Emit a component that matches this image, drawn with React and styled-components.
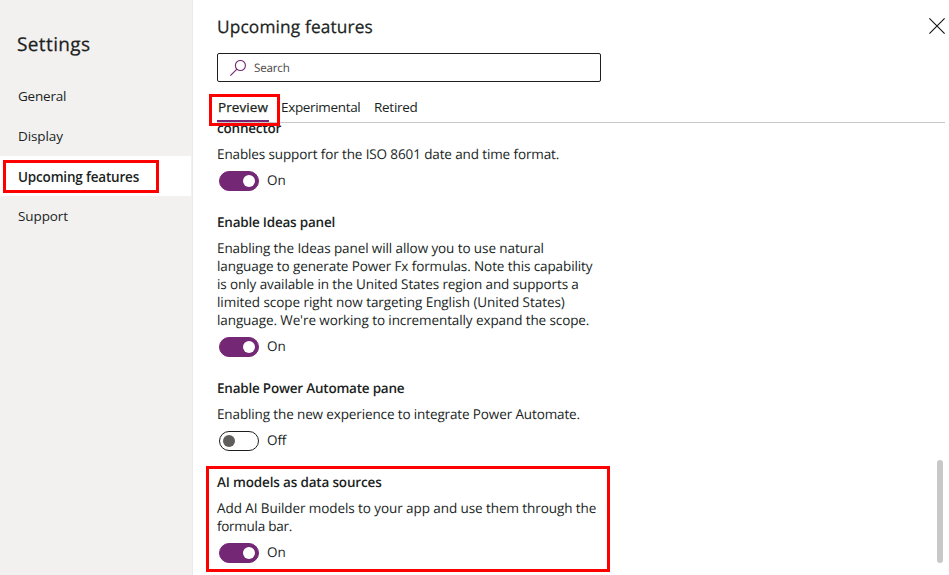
import React from "react";
import styled, { createGlobalStyle } from "styled-components";

const GlobalStyle = createGlobalStyle`
  *, *::before, *::after { box-sizing: border-box; }
  body {
    margin: 0;
    overflow: hidden;
    background: #fff;
    color: #201f1e;
    font: 400 13.5px/18px "Open Sans", "Noto Sans", sans-serif;
    text-rendering: geometricPrecision;
  }
  h1, h2, h3, p { margin: 0; }
  button { border: 0; padding: 0; background: none; color: inherit; font: inherit; }
`;

const Text = styled.span`
  letter-spacing: ${(p) => p.$track || 0}px;
  white-space: pre;
`;

const Dialog = styled.div`
  display: flex;
  width: 949px;
  height: 575px;
  overflow: hidden;
`;

const Sidebar = styled.aside`
  flex: 0 0 193px;
  display: flex;
  flex-direction: column;
  background: #f2f1ef;
  border-right: 1px solid #eae9e7;
`;

const SidebarTitle = styled.h1`
  padding: 31px 0 0 17px;
  height: 76px;
  font-size: 19px;
  line-height: 26px;
  font-weight: 500;
  -webkit-text-stroke: 0.25px currentColor;
`;

const NavItem = styled.button`
  position: relative;
  display: flex;
  align-items: center;
  width: 191px;
  height: 40px;
  padding: ${(p) => (p.$active ? 1 : 0)}px 0 0 18px;
  text-align: left;
  font-weight: ${(p) => (p.$active ? 600 : 400)};
  background: ${(p) => (p.$active ? "#fff" : "transparent")};
`;

const Highlight = styled.span`
  position: absolute;
  z-index: 2;
  top: ${(p) => p.$top}px;
  left: ${(p) => p.$left}px;
  width: ${(p) => p.$width}px;
  height: ${(p) => p.$height}px;
  border: 3px solid #fe0000;
  pointer-events: none;
`;

const Main = styled.main`
  flex: 1;
  min-width: 0;
  display: flex;
  flex-direction: column;
`;

const Header = styled.header`
  display: flex;
  justify-content: space-between;
  height: 53px;
  padding: 15px 4px 0 24px;
`;

const Heading = styled.h2`
  padding-top: 1px;
  font-size: 17.3px;
  line-height: 24px;
  font-weight: 500;
  -webkit-text-stroke: 0.25px currentColor;
`;

const CloseButton = styled.button`
  width: 16px;
  height: 16px;
  margin-top: 3px;
  svg { display: block; }
`;

const SearchBox = styled.div`
  display: flex;
  align-items: center;
  width: 384px;
  height: 29px;
  margin-left: 24px;
  padding-left: 12px;
  gap: 8px;
  border: 1px solid #201f1e;
  border-radius: 2px;
  color: #484644;
  font-size: 11.6px;
`;

const SearchText = styled(Text)`
  padding-top: 2px;
`;

const TabList = styled.div`
  position: relative;
  z-index: 1;
  display: flex;
  align-items: flex-start;
  height: 41px;
  margin: 0 4px 0 24px;
  padding-top: 16px;
  border-bottom: 1px solid #c8c8c8;
`;

const Tab = styled.button`
  position: relative;
  width: ${(p) => p.$width}px;
  height: 24px;
  margin-right: ${(p) => p.$gap || 0}px;
  padding: 0 0 5px 1px;
  text-align: left;
  font-weight: ${(p) => (p.$active ? 500 : 400)};
  -webkit-text-stroke: ${(p) => (p.$active ? 0.25 : 0)}px currentColor;
  border-bottom: 2px solid ${(p) => (p.$active ? "#742774" : "transparent")};
`;

const ScrollArea = styled.div`
  position: relative;
  flex: 1;
  min-height: 0;
  overflow: hidden;
`;

const FeatureList = styled.div`
  display: flex;
  flex-direction: column;
  gap: 22px;
  margin-top: -4px;
  padding-left: 24px;
`;

const Feature = styled.section`
  position: relative;
  display: flex;
  flex-direction: column;
  gap: 8px;
`;

const FeatureTitle = styled.h3`
  font-size: 13.5px;
  line-height: 18px;
  font-weight: 600;
`;

const Description = styled.p`
  display: flex;
  flex-direction: column;
`;

const ToggleRow = styled.div`
  display: flex;
  align-items: center;
  gap: 8px;
  height: 20px;
  padding-left: 2px;
  line-height: 20px;
`;

const ToggleLabel = styled(Text)`
  margin-top: -2px;
`;

const Track = styled.button`
  display: flex;
  align-items: center;
  justify-content: ${(p) => (p.$on ? "flex-end" : "flex-start")};
  width: 40px;
  height: 20px;
  padding: 0 ${(p) => (p.$on ? 3 : 4)}px 0 3px;
  border-radius: 10px;
  border: 1px solid ${(p) => (p.$on ? "#742774" : "#201f1e")};
  background: ${(p) => (p.$on ? "#742774" : "#fff")};
`;

const Thumb = styled.span`
  width: 12px;
  height: 12px;
  border-radius: 50%;
  background: ${(p) => (p.$on ? "#fff" : "#605e5c")};
`;

const Scrollbar = styled.div`
  position: absolute;
  top: 337px;
  right: 6px;
  width: 6px;
  height: 103px;
  border-radius: 3px;
  background: #c8c8c8;
`;

const NAV = [
  { label: "General", track: -0.2 },
  { label: "Display", track: -0.1 },
  { label: "Upcoming features", track: -0.18, active: true },
  { label: "Support", track: -0.1 },
];

const FEATURES = [
  {
    title: "connector",
    track: -0.2,
    lines: [["Enables support for the ISO 8601 date and time format.", -0.12]],
    on: true,
  },
  {
    title: "Enable Ideas panel",
    track: -0.22,
    lines: [
      ["Enabling the Ideas panel will allow you to use natural", -0.095],
      ["language to generate Power Fx formulas. Note this capability", -0.1],
      ["is only available in the United States region and supports a", -0.1],
      ["limited scope right now targeting English (United States)", -0.055],
      ["language. We're working to incrementally expand the scope.", -0.1],
    ],
    on: true,
  },
  {
    title: "Enable Power Automate pane",
    track: -0.22,
    lines: [["Enabling the new experience to integrate Power Automate.", -0.127]],
    on: false,
  },
  {
    title: "AI models as data sources",
    track: -0.17,
    lines: [
      ["Add AI Builder models to your app and use them through the", -0.08],
      ["formula bar.", -0.27],
    ],
    on: true,
    highlighted: true,
  },
];

function CloseIcon() {
  return (
    <svg width="16" height="16" viewBox="0 0 16 16" fill="none" stroke="#111" strokeWidth="1.1">
      <path d="M0.4 0.4 15.6 15.6M15.6 0.4 0.4 15.6" />
    </svg>
  );
}

function SearchIcon() {
  return (
    <svg width="16" height="16" viewBox="0 0 16 16" fill="none" stroke="#742774" strokeWidth="1.1">
      <circle cx="10.4" cy="5.5" r="5" />
      <path d="M6.9 9.1 0.4 15.6" />
    </svg>
  );
}

function Toggle({ on }) {
  return (
    <ToggleRow>
      <Track type="button" role="switch" aria-checked={on} $on={on}>
        <Thumb $on={on} />
      </Track>
      <ToggleLabel $track={-0.1}>{on ? "On" : "Off"}</ToggleLabel>
    </ToggleRow>
  );
}

export default function App() {
  return (
    <>
      <GlobalStyle />
      <Dialog>
        <Sidebar>
          <SidebarTitle>
            <Text $track={0.38}>Settings</Text>
          </SidebarTitle>
          {NAV.map((item) => (
            <NavItem key={item.label} type="button" $active={item.active}>
              <Text $track={item.track}>{item.label}</Text>
              {item.active && <Highlight $top={4} $left={3} $width={156} $height={33} />}
            </NavItem>
          ))}
        </Sidebar>
        <Main>
          <Header>
            <Heading>
              <Text $track={0.14}>Upcoming features</Text>
            </Heading>
            <CloseButton type="button" aria-label="Close">
              <CloseIcon />
            </CloseButton>
          </Header>
          <SearchBox>
            <SearchIcon />
            <SearchText $track={-0.18}>Search</SearchText>
          </SearchBox>
          <TabList>
            <Tab type="button" $active $width={52} $gap={11}>
              <Text $track={0.1}>Preview</Text>
              <Highlight $top={-4} $left={-8} $width={71} $height={32} />
            </Tab>
            <Tab type="button" $width={80} $gap={13}>
              <Text $track={-0.33}>Experimental</Text>
            </Tab>
            <Tab type="button" $width={46}>
              <Text $track={-0.27}>Retired</Text>
            </Tab>
          </TabList>
          <ScrollArea>
            <FeatureList>
              {FEATURES.map((f) => (
                <Feature key={f.title}>
                  <FeatureTitle>
                    <Text $track={f.track}>{f.title}</Text>
                  </FeatureTitle>
                  <Description>
                    {f.lines.map(([line, track]) => (
                      <Text key={line} $track={track}>{line}</Text>
                    ))}
                  </Description>
                  <Toggle on={f.on} />
                  {f.highlighted && <Highlight $top={-7} $left={-11} $width={404} $height={106} />}
                </Feature>
              ))}
            </FeatureList>
            <Scrollbar />
          </ScrollArea>
        </Main>
      </Dialog>
    </>
  );
}
